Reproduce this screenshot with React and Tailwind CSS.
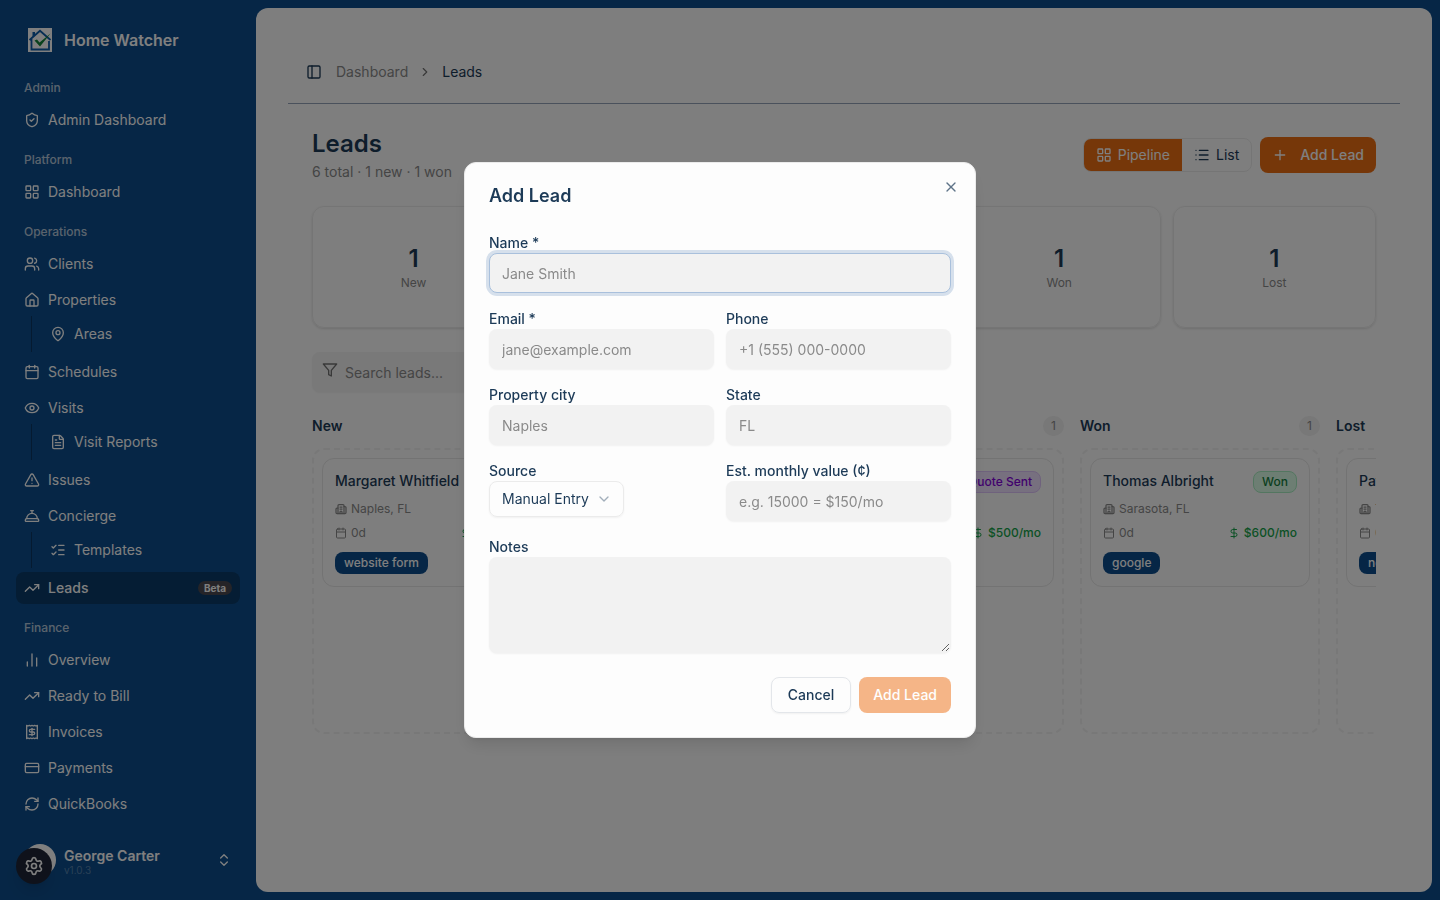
import React, { useState } from "react";
import {
  Building2,
  Calendar,
  ChartNoAxesColumn,
  ChevronDown,
  ChevronRight,
  ChevronsUpDown,
  ConciergeBell,
  CreditCard,
  DollarSign,
  Eye,
  FileText,
  House,
  LayoutGrid,
  List,
  ListChecks,
  MapPin,
  PanelLeft,
  Plus,
  RefreshCw,
  Settings,
  ShieldCheck,
  TrendingUp,
  TriangleAlert,
  Users,
  X,
} from "lucide-react";

const ReceiptIcon = ({ className }) => (
  <svg
    viewBox="0 0 24 24"
    fill="none"
    stroke="currentColor"
    strokeWidth="2"
    strokeLinecap="round"
    strokeLinejoin="round"
    className={className}
    aria-hidden="true"
  >
    <path d="M4 2v20l2-1 2 1 2-1 2 1 2-1 2 1 2-1 2 1V2l-2 1-2-1-2 1-2-1-2 1-2-1-2 1Z" />
    <path d="M16 8h-6a2 2 0 1 0 0 4h4a2 2 0 1 1 0 4H8" />
    <path d="M12 17.5v-11" />
  </svg>
);

const FilterIcon = ({ className }) => (
  <svg
    viewBox="0 0 24 24"
    fill="none"
    stroke="currentColor"
    strokeWidth="2"
    strokeLinecap="round"
    strokeLinejoin="round"
    className={className}
    aria-hidden="true"
  >
    <polygon points="22 3 2 3 10 12.46 10 19 14 21 14 12.46 22 3" />
  </svg>
);

const Logo = () => (
  <svg viewBox="0 0 24 24" className="size-6 shrink-0" aria-hidden="true">
    <rect width="24" height="24" fill="#fff" />
    <path d="M4.5 9V4H7v3" fill="#0d5ca8" />
    <path
      d="M1.5 12 12 2.8 22.5 12M3.5 11v10.500h17.500V13"
      fill="none"
      stroke="#0d5ca8"
      strokeWidth="1.8"
    />
    <path d="M6.500 12.500 9 11.500l2.500 3L22.500 5.500 12 18.500Z" fill="#12853a" />
  </svg>
);

const navGroups = [
  {
    label: "Admin",
    items: [{ title: "Admin Dashboard", icon: ShieldCheck }],
  },
  {
    label: "Platform",
    items: [{ title: "Dashboard", icon: LayoutGrid }],
  },
  {
    label: "Operations",
    items: [
      { title: "Clients", icon: Users },
      { title: "Properties", icon: House, child: { title: "Areas", icon: MapPin } },
      { title: "Schedules", icon: Calendar },
      { title: "Visits", icon: Eye, child: { title: "Visit Reports", icon: FileText } },
      { title: "Issues", icon: TriangleAlert },
      {
        title: "Concierge",
        icon: ConciergeBell,
        child: { title: "Templates", icon: ListChecks },
      },
      { title: "Leads", icon: TrendingUp, active: true, badge: "Beta" },
    ],
  },
  {
    label: "Finance",
    items: [
      { title: "Overview", icon: ChartNoAxesColumn },
      { title: "Ready to Bill", icon: TrendingUp },
      { title: "Invoices", icon: ReceiptIcon },
      { title: "Payments", icon: CreditCard },
      { title: "QuickBooks", icon: RefreshCw },
    ],
  },
];

const stats = [
  { label: "New", value: 1 },
  { label: "Contacted", value: 2 },
  { label: "Quote Sent", value: 1 },
  { label: "Won", value: 1 },
  { label: "Lost", value: 1 },
];

const columns = [
  {
    title: "New",
    badge: "bg-blue-100 text-blue-700 border-blue-200",
    leads: [
      { name: "Margaret Whitfield", city: "Naples, FL", value: "$350/mo", source: "website form" },
    ],
  },
  {
    title: "Contacted",
    badge: "bg-amber-100 text-amber-700 border-amber-200",
    leads: [{ name: "Robert Hayes", city: "Tampa, FL", value: "$400/mo", source: "referral" }],
  },
  {
    title: "Quote Sent",
    badge: "bg-[#efe0ff] text-purple-700 border-[#dfc4fb]",
    leads: [{ name: "Linda Moore", city: "Miami, FL", value: "$500/mo", source: "referral" }],
  },
  {
    title: "Won",
    badge: "bg-green-100 text-[#15803d] border-[#a7ecc0]",
    leads: [
      { name: "Thomas Albright", city: "Sarasota, FL", value: "$600/mo", source: "google" },
    ],
  },
  {
    title: "Lost",
    badge: "bg-gray-100 text-gray-700 border-gray-200",
    leads: [{ name: "Patricia Lane", city: "Tampa, FL", value: "$250/mo", source: "nextdoor" }],
  },
];

const NavItem = ({ item }) => {
  const Icon = item.icon;
  return (
    <li>
      <a
        href="#"
        className={`flex h-8 items-center gap-2 rounded-lg px-2 text-sm ${
          item.active ? "bg-[#0a3a68] font-medium" : "hover:bg-white/5"
        }`}
      >
        <Icon className="size-4 shrink-0" />
        <span className="flex-1 truncate">{item.title}</span>
        {item.badge && (
          <span className="rounded-full bg-[#4a4850] px-1.5 text-[10px] font-bold leading-[14px]">
            {item.badge}
          </span>
        )}
      </a>
      {item.child && (
        <ul className="ml-[15px] border-l border-[#0a3560] py-1 pl-2.5">
          <li>
            <a href="#" className="flex h-7 items-center gap-2 rounded-lg px-2 text-sm">
              <item.child.icon className="size-4 shrink-0" />
              <span className="truncate">{item.child.title}</span>
            </a>
          </li>
        </ul>
      )}
    </li>
  );
};

const Sidebar = () => (
  <aside className="flex w-64 shrink-0 flex-col text-white">
    <div className="flex items-center gap-3 px-7 pb-5 pt-7">
      <Logo />
      <span className="text-base font-semibold leading-6">Home Watcher</span>
    </div>
    <nav className="flex min-h-0 flex-1 flex-col gap-2 overflow-hidden px-4">
      {navGroups.map((group) => (
        <div key={group.label}>
          <p className="px-2 text-xs font-medium leading-8 text-white/70">{group.label}</p>
          <ul className="flex flex-col gap-1">
            {group.items.map((item) => (
              <NavItem key={item.title} item={item} />
            ))}
          </ul>
        </div>
      ))}
    </nav>
    <div className="p-4 pt-2">
      <button type="button" className="flex h-12 w-full items-center gap-2 rounded-lg px-2 text-left">
        <span className="size-8 shrink-0 rounded-full bg-white" />
        <span className="flex-1">
          <span className="block text-sm font-semibold leading-5">George Carter</span>
          <span className="block text-[10px] leading-2 text-white/30">v1.0.3</span>
        </span>
        <ChevronsUpDown className="size-4" />
      </button>
    </div>
  </aside>
);

const LeadCard = ({ lead, status, badge }) => (
  <article className="rounded-xl border border-[#e6e6e6] p-3">
    <div className="flex items-start justify-between gap-2">
      <h3 className="truncate text-sm font-medium leading-5">{lead.name}</h3>
      <span
        className={`shrink-0 rounded-lg border px-2 text-xs font-medium leading-5 ${badge}`}
      >
        {status}
      </span>
    </div>
    <p className="mt-2 flex items-center gap-1 text-xs text-[#8a8a8a]">
      <Building2 className="size-3" strokeWidth={2.5} />
      {lead.city}
    </p>
    <div className="mt-2 flex items-center justify-between text-xs">
      <span className="flex items-center gap-1 text-[#8a8a8a]">
        <Calendar className="size-3" />
        0d
      </span>
      <span className="flex items-center gap-1 font-medium text-[#16a34a]">
        <DollarSign className="size-3" />
        {lead.value}
      </span>
    </div>
    <span className="mt-[11px] inline-block rounded-lg border border-transparent bg-[#0d4d8c] px-2 align-top text-xs font-medium leading-5 text-white">
      {lead.source}
    </span>
  </article>
);

const labelClass = "block text-sm font-medium leading-5";

const fieldClass =
  "h-10 w-full rounded-lg border border-transparent bg-[#f2f2f2] px-3 text-sm text-[#1c3a57] shadow-xs outline-none placeholder:text-[#8a8a8a] focus:border-[#a9c0dc] focus:ring-3 focus:ring-[#d6e0ec]";

const Field = ({ id, label, className, ...props }) => (
  <div className={className}>
    <label htmlFor={id} className={labelClass}>
      {label}
    </label>
    <input id={id} className={fieldClass} {...props} />
  </div>
);

const AddLeadDialog = ({ onClose }) => {
  const [name, setName] = useState("");
  const [email, setEmail] = useState("");

  return (
    <div className="fixed inset-0 z-50 flex items-center justify-center bg-black/50 p-4">
      <div
        role="dialog"
        aria-modal="true"
        aria-labelledby="add-lead-title"
        className="relative w-full max-w-lg rounded-xl border border-[#ebebeb] bg-[#fdfdfd] p-6 text-[#1c3a57] shadow-lg"
      >
        <button
          type="button"
          aria-label="Close"
          onClick={onClose}
          className="absolute right-4 top-4 opacity-70"
        >
          <X className="size-4" />
        </button>
        <h2 id="add-lead-title" className="text-lg font-semibold leading-none">
          Add Lead
        </h2>

        <form className="mt-7" onSubmit={(e) => e.preventDefault()}>
          <div className="grid grid-cols-2 gap-x-3 gap-y-4">
            <Field
              id="name"
              label="Name *"
              placeholder="Jane Smith"
              className="col-span-2"
              autoFocus
              value={name}
              onChange={(e) => setName(e.target.value)}
            />
            <Field
              id="email"
              label="Email *"
              placeholder="jane@example.com"
              type="email"
              value={email}
              onChange={(e) => setEmail(e.target.value)}
            />
            <Field id="phone" label="Phone" placeholder="+1 (555) 000-0000" type="tel" />
            <Field id="city" label="Property city" placeholder="Naples" />
            <Field id="state" label="State" placeholder="FL" />
            <div>
              <label htmlFor="source" className={labelClass}>
                Source
              </label>
              <div className="relative inline-block align-top">
                <select
                  id="source"
                  className="h-9 appearance-none rounded-lg border border-[#ebebeb] bg-transparent pl-3 pr-[34px] text-sm shadow-xs outline-none"
                >
                  <option>Manual Entry</option>
                </select>
                <ChevronDown className="pointer-events-none absolute right-3 top-2.5 size-4 opacity-40" />
              </div>
            </div>
            <Field id="value" label="Est. monthly value (¢)" placeholder="e.g. 15000 = $150/mo" />
            <div className="col-span-2">
              <label htmlFor="notes" className={labelClass}>
                Notes
              </label>
              <textarea
                id="notes"
                className="block h-24 w-full rounded-lg border border-transparent bg-[#f2f2f2] px-3 py-2 text-sm shadow-xs outline-none"
              />
            </div>
          </div>

          <div className="mt-6 flex justify-end gap-2 text-sm font-medium">
            <button
              type="button"
              onClick={onClose}
              className="h-9 rounded-lg border border-[#e3e6ea] px-4 shadow-xs"
            >
              Cancel
            </button>
            <button
              type="submit"
              disabled={!name || !email}
              className="h-9 rounded-lg bg-[#ed6f13] px-3.5 text-white disabled:opacity-50"
            >
              Add Lead
            </button>
          </div>
        </form>
      </div>
    </div>
  );
};

export default function App() {
  const [open, setOpen] = useState(true);

  return (
    <div className="flex h-screen overflow-hidden bg-[#0d4d8c] font-['Inter',sans-serif] text-[#1c3a57]">
      <Sidebar />

      <main className="my-2 mr-2 min-w-0 flex-1 overflow-hidden rounded-xl bg-[#fdfdfd] p-8">
        <header className="flex h-16 items-center gap-2 border-b border-[#94a3b8] px-3">
          <button
            type="button"
            aria-label="Toggle sidebar"
            className="flex size-7 items-center justify-center"
          >
            <PanelLeft className="size-4" />
          </button>
          <nav className="flex items-center gap-2.5 text-sm">
            <a href="#" className="text-[#8a8a8a]">
              Dashboard
            </a>
            <ChevronRight className="size-3.5 text-[#737373]" />
            <span>Leads</span>
          </nav>
        </header>

        <div className="flex flex-col gap-6 p-6">
          <div className="flex items-center justify-between">
            <div>
              <h1 className="text-2xl font-semibold">Leads</h1>
              <p className="mt-0.5 text-sm text-[#8a8a8a]">6 total · 1 new · 1 won</p>
            </div>
            <div className="flex items-center gap-2 text-sm">
              <div className="flex overflow-hidden rounded-lg border border-[#ebebeb]">
                <button
                  type="button"
                  className="flex h-8 items-center gap-1.5 bg-[#ed6f13] px-3 text-white"
                >
                  <LayoutGrid className="size-4" />
                  Pipeline
                </button>
                <button type="button" className="flex h-8 items-center gap-1.5 px-3">
                  <List className="size-4" />
                  List
                </button>
              </div>
              <button
                type="button"
                onClick={() => setOpen(true)}
                className="flex h-9 items-center gap-3 rounded-lg bg-[#ed6f13] px-3 font-medium text-white"
              >
                <Plus className="size-4" />
                Add Lead
              </button>
            </div>
          </div>

          <div className="grid grid-cols-5 gap-3">
            {stats.map((stat) => (
              <div
                key={stat.label}
                className="rounded-xl border border-[#ebebeb] py-9 text-center shadow-sm"
              >
                <p className="text-2xl font-semibold">{stat.value}</p>
                <p className="text-xs text-[#8a8a8a]">{stat.label}</p>
              </div>
            ))}
          </div>

          <div className="relative w-full max-w-sm">
            <FilterIcon className="absolute left-2.5 top-2.5 size-4 text-[#737373]" />
            <input
              type="search"
              aria-label="Search leads"
              placeholder="Search leads..."
              className="block h-10 w-full rounded-lg bg-[#f2f2f2] pl-[33px] pr-3 text-sm shadow-xs outline-none placeholder:text-[#8a8a8a]"
            />
          </div>

          <div className="flex gap-4 overflow-hidden">
            {columns.map((column) => (
              <section key={column.title} className="w-60 shrink-0">
                <div className="mb-3 flex items-center justify-between">
                  <h2 className="text-sm font-semibold">{column.title}</h2>
                  <span className="rounded-full bg-[#f0f0f0] px-2 text-xs leading-5 text-[#8a8a8a]">
                    {column.leads.length}
                  </span>
                </div>
                <div className="min-h-[286px] rounded-xl border-2 border-dashed border-[#f1f1f1] p-2">
                  {column.leads.map((lead) => (
                    <LeadCard
                      key={lead.name}
                      lead={lead}
                      status={column.title}
                      badge={column.badge}
                    />
                  ))}
                </div>
              </section>
            ))}
          </div>
        </div>
      </main>

      <button
        type="button"
        aria-label="Settings"
        className="fixed bottom-4 left-4 flex size-9 items-center justify-center rounded-full bg-[#1e2536] text-white shadow-lg"
      >
        <Settings className="size-5" />
      </button>

      {open && <AddLeadDialog onClose={() => setOpen(false)} />}
    </div>
  );
}
